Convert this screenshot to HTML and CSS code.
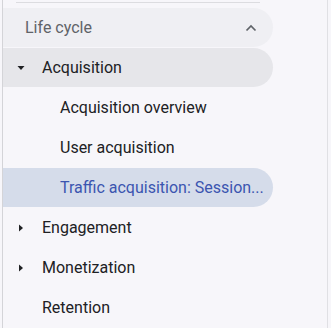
FILE: index.html
```html
<!DOCTYPE html>
<html lang="en">
<head>
    <meta charset="UTF-8">
    <meta name="viewport" content="width=device-width, initial-scale=1.0">
    <title>Reports navigation</title>
    <link rel="stylesheet" href="styles.css">
</head>
<body>
    <div class="panel">
        <div class="divider"></div>

        <nav class="nav">
            <div class="row section">
                <span class="label">Life cycle</span>
                <svg class="chevron" width="12" height="8" viewBox="0 0 12 8">
                    <path d="M1.5 6.5 L6 2 L10.5 6.5" fill="none" stroke="#5f6368" stroke-width="1.7"/>
                </svg>
            </div>

            <div class="row group open">
                <svg class="caret" width="8" height="8" viewBox="0 0 8 8">
                    <path d="M0.5 2 L7.5 2 L4 6 Z" fill="#202124"/>
                </svg>
                <span class="label">Acquisition</span>
            </div>

            <div class="row child"><span class="label">Acquisition overview</span></div>
            <div class="row child"><span class="label">User acquisition</span></div>
            <div class="row child active"><span class="label">Traffic acquisition: Session...</span></div>

            <div class="row group">
                <svg class="caret" width="8" height="8" viewBox="0 0 8 8">
                    <path d="M2 0.5 L6 4 L2 7.5 Z" fill="#202124"/>
                </svg>
                <span class="label">Engagement</span>
            </div>

            <div class="row group">
                <svg class="caret" width="8" height="8" viewBox="0 0 8 8">
                    <path d="M2 0.5 L6 4 L2 7.5 Z" fill="#202124"/>
                </svg>
                <span class="label">Monetization</span>
            </div>

            <div class="row group plain"><span class="label">Retention</span></div>
        </nav>
    </div>
</body>
</html>
```

FILE: styles.css
```css
body {
    margin: 0;
    padding: 0 3px 0 2px;
    background-color: #f7f6fa;
    font-family: Roboto, "Noto Sans", sans-serif;
}

.panel {
    height: 328px;
    border-left: 1px solid #d4d4d8;
    border-right: 1px solid #e0e0e4;
    box-sizing: border-box;
    overflow: hidden;
}

.divider {
    height: 1px;
    margin: 2px 0 0 13px;
    width: 244px;
    background-color: #dcdce0;
}

.nav {
    width: 270px;
    padding-top: 5px;
    display: flex;
    flex-direction: column;
    gap: 1px;
}

.row {
    height: 39px;
    display: flex;
    align-items: center;
    border-radius: 0 20px 20px 0;
    font-size: 16px;
    color: #202124;
    box-sizing: border-box;
}

.section {
    padding: 0 16px 0 22px;
    justify-content: space-between;
    background-color: #efeff3;
    color: #5f6368;
}

.group {
    padding-left: 14px;
}

.group .caret {
    margin-right: 17px;
}

.open {
    background-color: #e6e6ea;
}

.plain {
    padding-left: 39px;
}

.child {
    padding-left: 57px;
}

.active {
    background-color: #d5dcea;
    color: #3b55b0;
}
```
